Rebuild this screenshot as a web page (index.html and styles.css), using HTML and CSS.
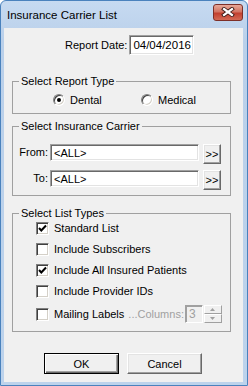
FILE: index.html
```html
<!DOCTYPE html>
<html lang="en">
<head>
    <meta charset="UTF-8">
    <meta name="viewport" content="width=device-width, initial-scale=1.0">
    <title>Insurance Carrier List</title>
    <link rel="stylesheet" href="styles.css">
</head>
<body>
<div class="window">
    <div class="titlebar">
        <span class="title">Insurance Carrier List</span>
        <span class="close">
            <svg width="14" height="10" viewBox="0 0 14 10">
                <path d="M3 2 L11 8 M11 2 L3 8" stroke="#3b1a17" stroke-width="4" stroke-linecap="square"/>
                <path d="M3 2 L11 8 M11 2 L3 8" stroke="#fff" stroke-width="2.2" stroke-linecap="square"/>
            </svg>
        </span>
    </div>

    <form class="client">
        <!-- Report date -->
        <div class="date-row">
            <label for="reportDate">Report Date:</label>
            <input class="edit date" id="reportDate" value="04/04/2016">
        </div>

        <!-- Report type -->
        <fieldset class="group group-type">
            <legend>Select Report Type</legend>
            <div class="radio-row">
                <label class="radio"><span class="radio-box checked"></span>Dental</label>
                <label class="radio"><span class="radio-box"></span>Medical</label>
            </div>
        </fieldset>

        <!-- Carrier range -->
        <fieldset class="group group-carrier">
            <legend>Select Insurance Carrier</legend>
            <div class="range-row">
                <label for="fromCarrier">From:</label>
                <input class="edit carrier" id="fromCarrier" value="&lt;ALL&gt;">
                <button class="btn pick" type="button">&gt;&gt;</button>
            </div>
            <div class="range-row">
                <label for="toCarrier">To:</label>
                <input class="edit carrier" id="toCarrier" value="&lt;ALL&gt;">
                <button class="btn pick" type="button">&gt;&gt;</button>
            </div>
        </fieldset>

        <!-- List types -->
        <fieldset class="group group-lists">
            <legend>Select List Types</legend>
            <label class="check"><span class="check-box checked"><svg width="9" height="9" viewBox="0 0 9 9"><polyline points="1,4 3.3,6.5 8,1.5" fill="none" stroke="#000" stroke-width="2"/></svg></span>Standard List</label>
            <label class="check"><span class="check-box"></span>Include Subscribers</label>
            <label class="check"><span class="check-box checked"><svg width="9" height="9" viewBox="0 0 9 9"><polyline points="1,4 3.3,6.5 8,1.5" fill="none" stroke="#000" stroke-width="2"/></svg></span>Include All Insured Patients</label>
            <label class="check"><span class="check-box"></span>Include Provider IDs</label>
            <div class="mail-row">
                <label class="check"><span class="check-box"></span>Mailing Labels</label>
                <span class="columns-label">...Columns:</span>
                <span class="spin-edit">3</span>
                <span class="spin">
                    <span class="spin-btn"><svg width="5" height="3" viewBox="0 0 5 3"><path d="M0 3 L2.5 0 L5 3 Z" fill="#a0a0a0"/></svg></span>
                    <span class="spin-btn"><svg width="5" height="3" viewBox="0 0 5 3"><path d="M0 0 L2.5 3 L5 0 Z" fill="#a0a0a0"/></svg></span>
                </span>
            </div>
        </fieldset>

        <div class="actions">
            <button class="btn action default" type="submit">OK</button>
            <button class="btn action" type="button">Cancel</button>
        </div>
    </form>
</div>
</body>
</html>
```

FILE: styles.css
```css
body { margin: 0; font-family: "Liberation Sans", Arial, sans-serif; font-size: 11px; color: #000; }

.window { width: 248px; height: 386px; box-sizing: border-box; display: flex; flex-direction: column; padding: 0 4px 3px 3px; background: linear-gradient(#c6daf1, #bad0ea 40px, #bdd3ec); border: 1px solid #4a82bd; border-radius: 6px 6px 0 0; }

.titlebar { height: 27px; display: flex; align-items: center; justify-content: space-between; padding-left: 3px; }
.title { font-size: 11.5px; color: #000; }
.close { width: 30px; height: 17px; box-sizing: border-box; margin-top: -5px; display: flex; align-items: center; justify-content: center; border: 1px solid #7d2f28; border-radius: 3px; background: linear-gradient(#e8a898, #d27463 45%, #c2402f 55%, #d36a55); }

.client { flex: 1; display: flex; flex-direction: column; margin: 0; background: #f0f0f0; }

label, .columns-label { white-space: nowrap; flex: none; }

.edit { box-sizing: border-box; margin: 0; padding: 0 0 0 3px; font-family: inherit; background: #fff; border: 1px solid; border-color: #a0a0a0 #fff #fff #a0a0a0; box-shadow: inset 1px 1px #696969, inset -1px -1px #e3e3e3; outline: none; }

.btn { box-sizing: border-box; margin: 0; padding: 0; font-family: inherit; font-size: 11px; color: #000; background: #f0f0f0; border: 1px solid; border-color: #fff #696969 #696969 #fff; box-shadow: inset -1px -1px #a0a0a0, inset 1px 1px #e3e3e3; }

/* report date */
.date-row { display: flex; align-items: center; gap: 2px; margin-top: 7px; padding-left: 61px; height: 20px; }
.date { width: 65px; height: 20px; font-size: 11.5px; }

/* group boxes */
.group { box-sizing: border-box; width: 219px; margin: 0 0 0 8px; padding: 0 6px; min-width: 0; border: 1px solid #a0a0a0; }
.group legend { padding: 0 2px; line-height: 14px; }

.group-type { margin-top: 19px; padding-top: 4px; padding-bottom: 5px; }
.radio-row { display: grid; grid-template-columns: 88px auto; padding-left: 34px; height: 16px; }
.radio { display: flex; align-items: center; gap: 5px; }
.radio-box { width: 12px; height: 12px; box-sizing: border-box; border-radius: 50%; background: #fff; border: 1px solid; border-color: #808080 #fff #fff #808080; box-shadow: inset 1px 1px #404040, inset -1px -1px #d4d0c8; display: flex; align-items: center; justify-content: center; }
.radio-box.checked::after { content: ""; width: 4px; height: 4px; border-radius: 50%; background: #000; }

.group-carrier { margin-top: 5px; padding-top: 11px; padding-bottom: 5px; display: flex; flex-direction: column; gap: 6px; }
.range-row { display: flex; align-items: flex-start; height: 20px; }
.range-row label { width: 29px; text-align: right; line-height: 17px; margin-right: 2px; }
.carrier { width: 149px; height: 17px; font-size: 11px; }
.pick { width: 18px; height: 20px; margin-left: 4px; font-size: 11px; }

.group-lists { margin-top: 10px; padding-bottom: 8px; display: flex; flex-direction: column; gap: 5px; }
.group-lists > .check, .mail-row { margin-left: 17px; }
.check { display: flex; align-items: center; gap: 5px; height: 16px; }
.check-box { width: 13px; height: 13px; box-sizing: border-box; background: #fff; border: 1px solid; border-color: #808080 #fff #fff #808080; box-shadow: inset 1px 1px #404040, inset -1px -1px #d4d0c8; display: flex; align-items: center; justify-content: center; }

.mail-row { display: flex; align-items: center; height: 18px; margin-top: 1px; }
.columns-label { margin-left: 4px; color: #a0a0a0; }
.spin-edit { box-sizing: border-box; width: 18px; height: 18px; margin-left: 1px; padding-left: 3px; color: #a0a0a0; font-size: 12px; line-height: 16px; border: 1px solid; border-color: #a0a0a0 #fff #fff #a0a0a0; box-shadow: inset 1px 1px #a0a0a0; }
.spin { display: flex; flex-direction: column; width: 18px; height: 18px; margin-left: 1px; }
.spin-btn { flex: 1; display: flex; align-items: center; justify-content: center; background: #f0f0f0; border: 1px solid; border-color: #fff #a0a0a0 #a0a0a0 #fff; }

/* buttons */
.actions { display: flex; gap: 8px; margin-top: 21px; padding-left: 40px; }
.action { width: 75px; height: 21px; }
.action.default { border-color: #000; box-shadow: inset 1px 1px #fff, inset -1px -1px #696969, inset -2px -2px #a0a0a0; }
```
